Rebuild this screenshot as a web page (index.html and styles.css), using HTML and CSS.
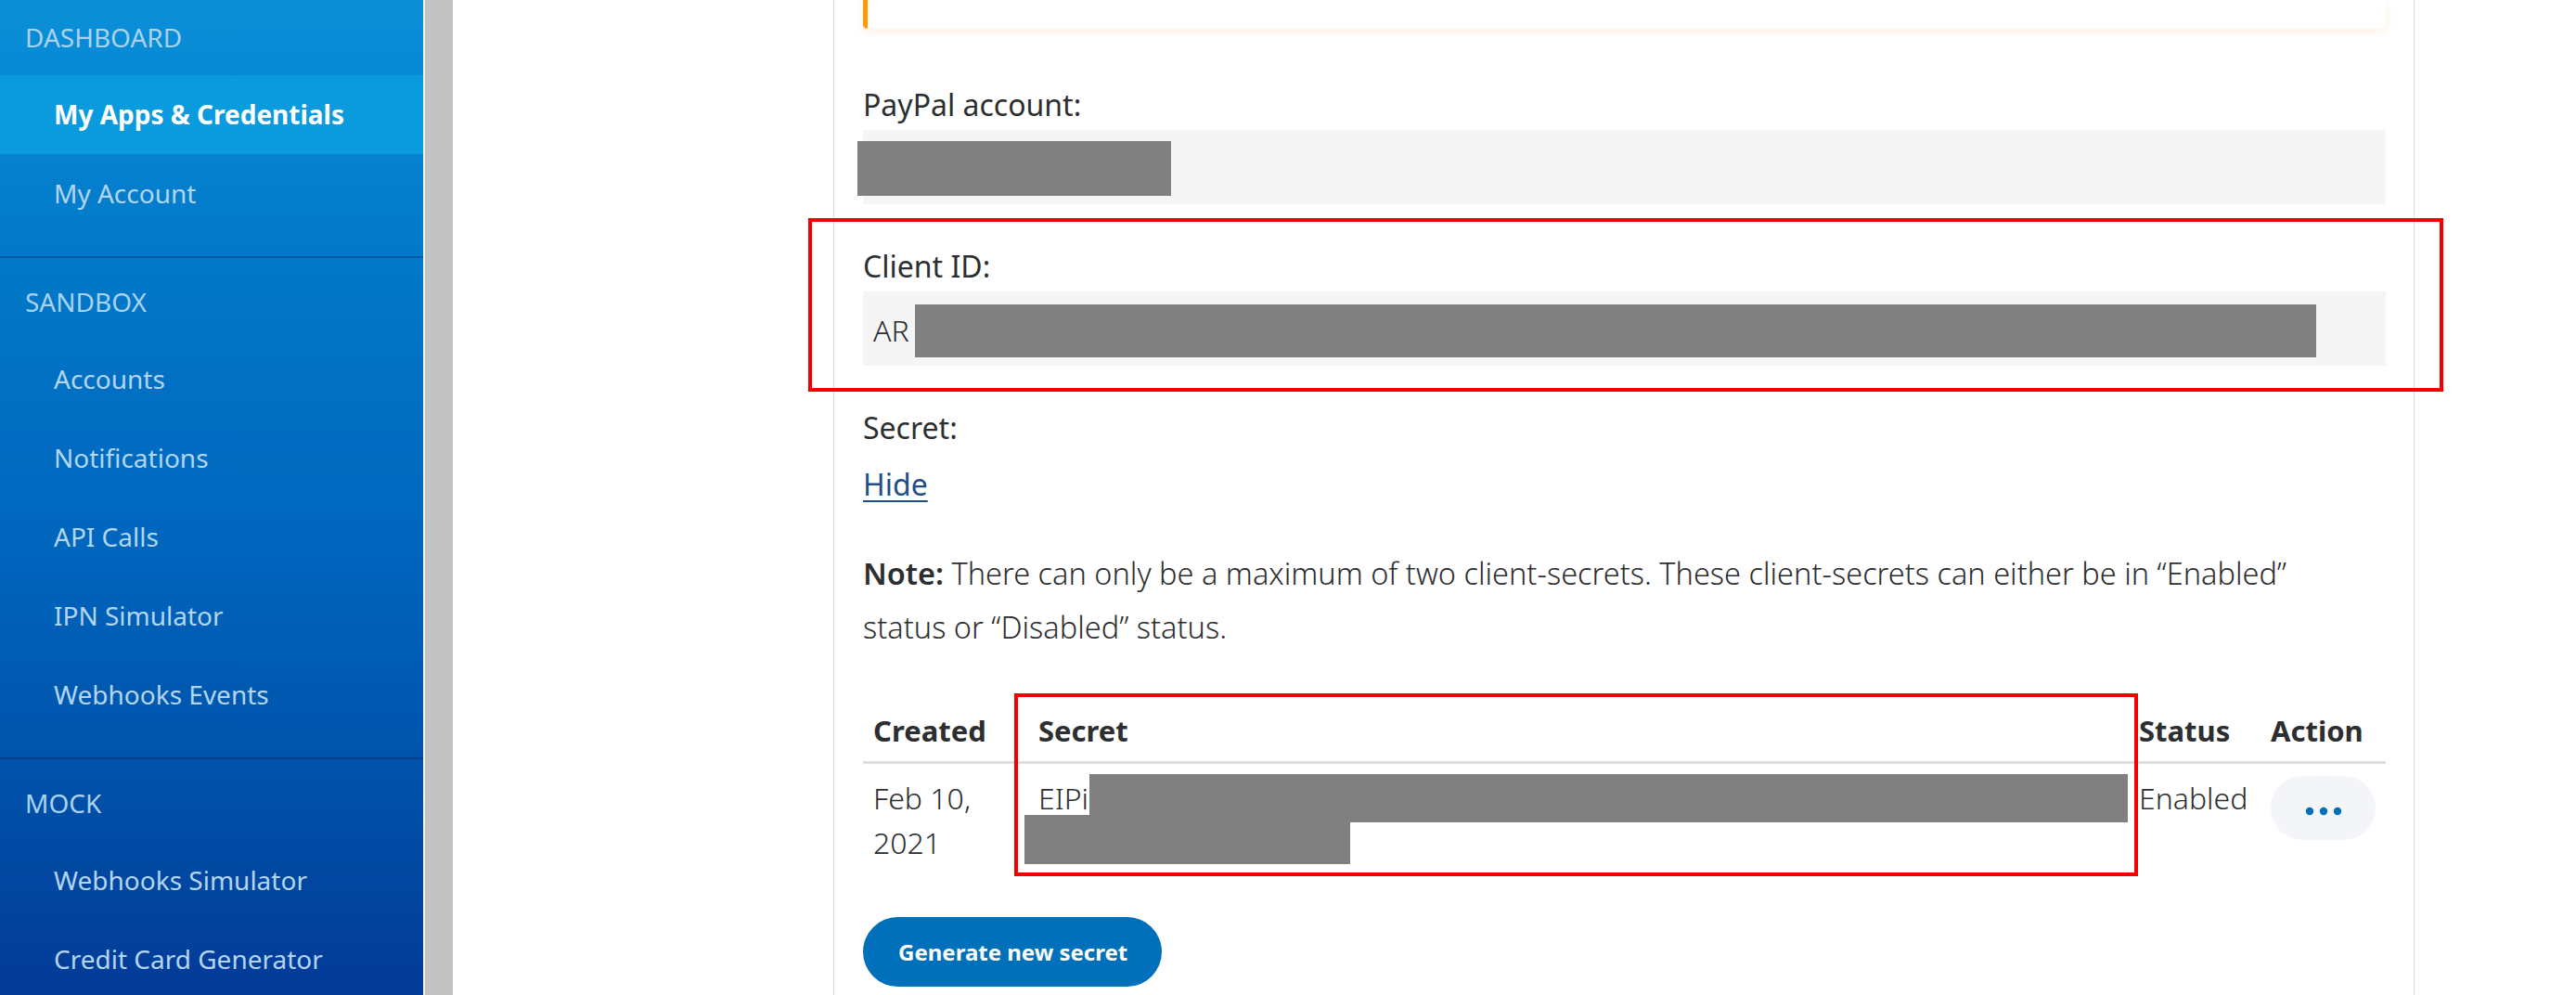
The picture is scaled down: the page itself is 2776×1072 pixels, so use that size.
FILE: index.html
```
<!DOCTYPE html>
<html lang="en">
<head>
<meta charset="utf-8">
<title>My Apps &amp; Credentials</title>
<link rel="stylesheet" href="styles.css">
</head>
<body>
<div class="app">
  <aside class="sidebar">
    <nav class="nav">
      <section class="nav-section">
        <div class="nav-head">DASHBOARD</div>
        <a class="nav-item active">My Apps &amp; Credentials</a>
        <a class="nav-item">My Account</a>
      </section>
      <section class="nav-section">
        <div class="nav-head">SANDBOX</div>
        <a class="nav-item">Accounts</a>
        <a class="nav-item">Notifications</a>
        <a class="nav-item">API Calls</a>
        <a class="nav-item">IPN Simulator</a>
        <a class="nav-item">Webhooks Events</a>
      </section>
      <section class="nav-section">
        <div class="nav-head">MOCK</div>
        <a class="nav-item">Webhooks Simulator</a>
        <a class="nav-item">Credit Card Generator</a>
      </section>
    </nav>
  </aside>
  <div class="gutter"></div>
  <main class="main">
    <div class="panel">
      <div class="alert"></div>

      <div class="label label-first">PayPal account:</div>
      <div class="field">
        <span class="redact redact-account"></span>
      </div>

      <div class="label">Client ID:</div>
      <div class="field field-text">
        <span class="field-value">AR</span>
        <span class="redact redact-client"></span>
      </div>

      <div class="label">Secret:</div>
      <a class="hide-link">Hide</a>

      <p class="note"><strong>Note:</strong> There can only be a maximum of two client-secrets. These client-secrets can either be in “Enabled” status or “Disabled” status.</p>

      <div class="secrets">
        <div class="th">Created</div>
        <div class="th">Secret</div>
        <div class="th">Status</div>
        <div class="th">Action</div>

        <div class="td">Feb 10, 2021</div>
        <div class="td td-secret">EIPi
          <span class="redact redact-secret1"></span>
          <span class="redact redact-secret2"></span>
        </div>
        <div class="td">Enabled</div>
        <div class="td">
          <button class="more-btn" aria-label="More actions">
            <svg width="40" height="10" viewBox="0 0 40 10"><circle cx="5" cy="5" r="4.2" fill="#0070ba"/><circle cx="20" cy="5" r="4.2" fill="#0070ba"/><circle cx="35" cy="5" r="4.2" fill="#0070ba"/></svg>
          </button>
        </div>
      </div>

      <button class="btn-primary">Generate new secret</button>

      <div class="highlight highlight-client"></div>
      <div class="highlight highlight-secret"></div>
    </div>
  </main>
</div>
</body>
</html>
```
FILE: styles.css
```
* { box-sizing: border-box; }

html, body {
  margin: 0;
  padding: 0;
  height: 100%;
  overflow: hidden;
  background: #fff;
  font-family: "Noto Sans", "Open Sans", sans-serif;
  color: #2c2e2f;
}

.app {
  display: flex;
  height: 1072px;
}

/* ---------- Sidebar ---------- */
.sidebar {
  width: 458px;
  flex: none;
  height: 100%;
  overflow: hidden;
  border-right: 2px solid #eef3f8;
  background: linear-gradient(180deg, #0a90d8 0%, #0279c9 25%, #0065bd 55%, #0050a8 80%, #033a97 100%);
}

.nav {
  margin-top: -7px;
}

.nav-section {
  padding-bottom: 25px;
  border-bottom: 2px solid rgba(4, 45, 110, 0.45);
}

.nav-head {
  height: 88px;
  padding: 6px 0 0 27px;
  line-height: 82px;
  font-size: 28px;
  color: #a9d3f1;
}

.nav-item {
  display: block;
  height: 85px;
  line-height: 85px;
  padding-left: 58px;
  font-size: 28px;
  color: #b3d6f0;
  text-decoration: none;
}

.nav-item.active {
  background: #0a9ade;
  color: #fff;
  font-weight: 700;
}

.gutter {
  width: 30px;
  flex: none;
  background: #c2c2c2;
}

/* ---------- Main ---------- */
.main {
  flex: 1;
  padding-left: 410px;
}

.panel {
  position: relative;
  width: 1704px;
  height: 100%;
  padding: 0 30px 0 31px;
  border-left: 1px solid #dcdcdc;
  border-right: 1px solid #dcdcdc;
}

.alert {
  height: 31px;
  background: #fff;
  border-left: 5px solid #ff9a00;
  border-radius: 0 0 4px 5px;
  box-shadow: 0 3px 10px rgba(255, 160, 60, 0.16);
}

.label {
  margin-top: 45px;
  font-size: 32px;
  line-height: 44px;
  font-weight: 400;
}

.label-first {
  margin-top: 60px;
}

.field {
  position: relative;
  height: 80px;
  margin-top: 5px;
  background: #f5f5f5;
}

.field-text {
  display: flex;
  align-items: center;
  padding: 4px 0 0 11px;
}

.field-value {
  font-size: 32px;
  font-weight: 300;
  line-height: 44px;
}

.redact {
  position: absolute;
  background: #808080;
}

.redact-account {
  left: -6px;
  top: 12px;
  width: 338px;
  height: 59px;
}

.redact-client {
  left: 56px;
  top: 14px;
  width: 1510px;
  height: 57px;
}

.hide-link {
  display: inline-block;
  margin-top: 17px;
  font-size: 32px;
  line-height: 44px;
  color: #1f4f86;
  text-decoration: underline;
  text-decoration-thickness: 2px;
  text-underline-offset: 5px;
  cursor: pointer;
}

.note {
  max-width: 1600px;
  margin: 45px 0 0;
  font-size: 32.5px;
  font-weight: 300;
  line-height: 58px;
}

.note strong {
  font-weight: 600;
}

/* ---------- Secrets table ---------- */
.secrets {
  display: grid;
  grid-template-columns: 178px 1186px 142px 1fr;
  margin-top: 58px;
}

.th {
  padding: 0 11px 9px;
  border-bottom: 3px solid #dedede;
  font-size: 31px;
  font-weight: 700;
  line-height: 48px;
}

.td {
  position: relative;
  padding: 13px 11px 0;
  font-size: 32px;
  font-weight: 300;
  line-height: 48px;
}

.redact-secret1 {
  left: 66px;
  top: 11px;
  width: 1119px;
  height: 52px;
}

.redact-secret2 {
  left: -4px;
  top: 55px;
  width: 351px;
  height: 53px;
}

.more-btn {
  display: flex;
  align-items: center;
  justify-content: center;
  width: 113px;
  height: 69px;
  padding: 6px 0 0;
  border: none;
  border-radius: 35px;
  background: #f3f5f8;
  cursor: pointer;
}

.btn-primary {
  display: inline-flex;
  align-items: center;
  height: 75px;
  margin-top: 56px;
  padding: 0 37px 0 38px;
  border: none;
  border-radius: 38px;
  background: #0070ba;
  color: #fff;
  font-family: "Noto Sans", "Open Sans", sans-serif;
  font-size: 24px;
  font-weight: 700;
  cursor: pointer;
}

/* ---------- Annotation boxes ---------- */
.highlight {
  position: absolute;
  border: 4px solid #f50000;
  pointer-events: none;
}

.highlight-client {
  left: -28px;
  top: 235px;
  width: 1762px;
  height: 187px;
}

.highlight-secret {
  left: 194px;
  top: 747px;
  width: 1211px;
  height: 197px;
}
```
